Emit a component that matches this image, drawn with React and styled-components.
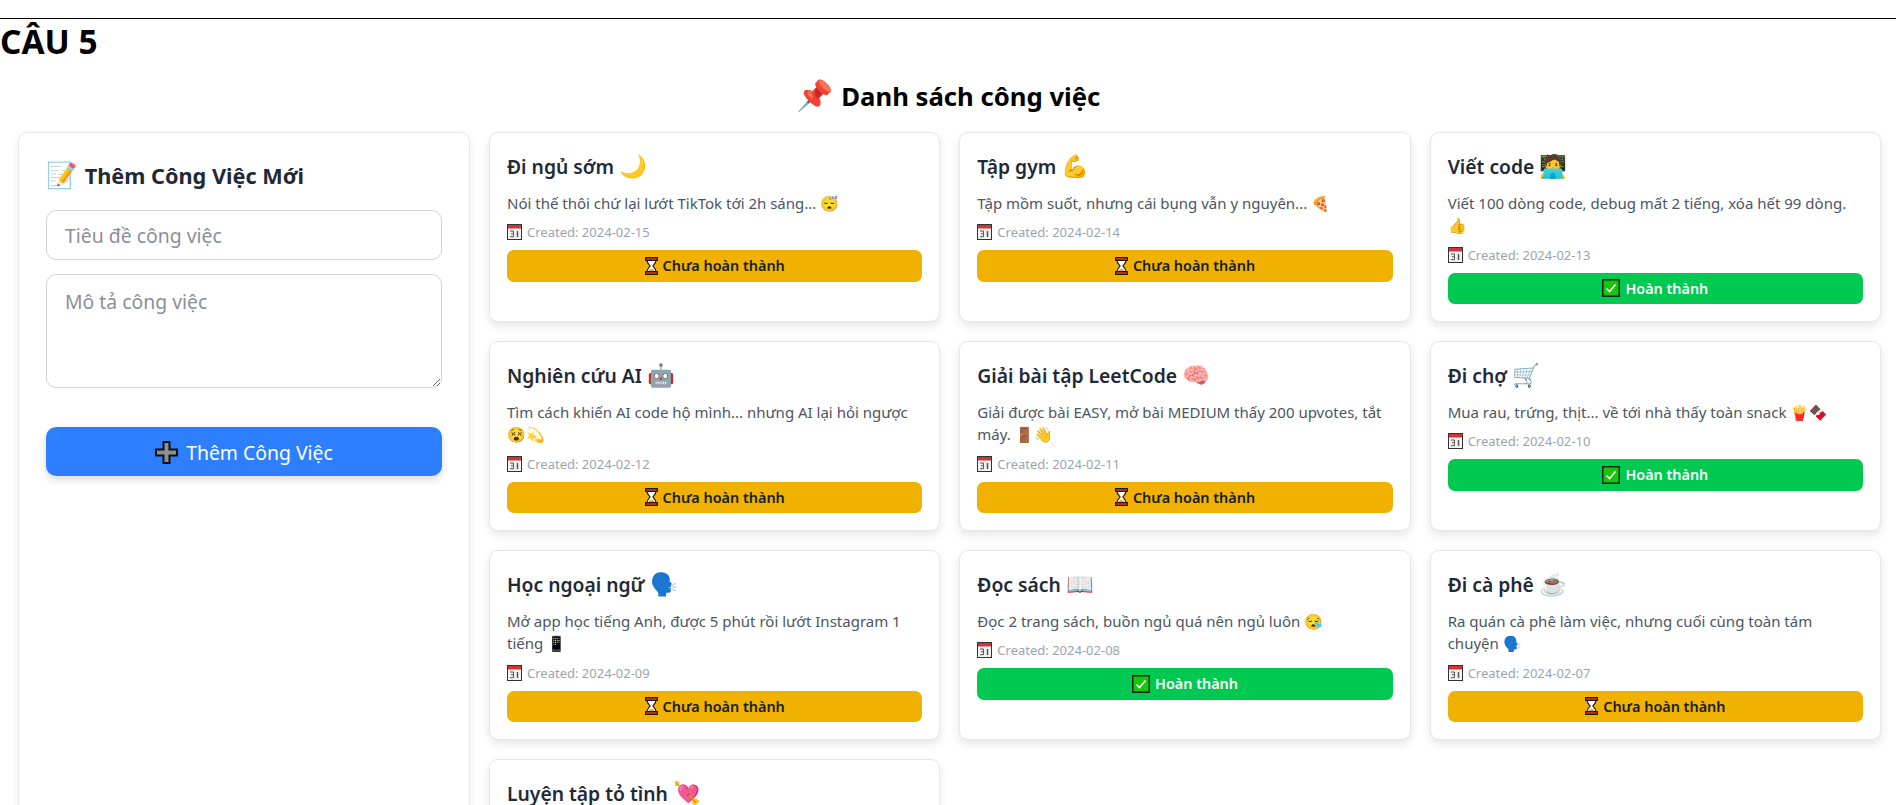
import React from 'react';
import styled, { createGlobalStyle } from 'styled-components';

const tasks = [
  { id: 1, title: 'Đi ngủ sớm', icon: '🌙', desc: 'Nói thế thôi chứ lại lướt TikTok tới 2h sáng... 😴', date: '2024-02-15', done: false },
  { id: 2, title: 'Tập gym', icon: '💪', desc: 'Tập mồm suốt, nhưng cái bụng vẫn y nguyên... 🍕', date: '2024-02-14', done: false },
  { id: 3, title: 'Viết code', icon: '🧑‍💻', desc: 'Viết 100 dòng code, debug mất 2 tiếng, xóa hết 99 dòng. 👍', date: '2024-02-13', done: true },
  { id: 4, title: 'Nghiên cứu AI', icon: '🤖', desc: 'Tìm cách khiến AI code hộ mình... nhưng AI lại hỏi ngược 😵💫', date: '2024-02-12', done: false },
  { id: 5, title: 'Giải bài tập LeetCode', icon: '🧠', desc: 'Giải được bài EASY, mở bài MEDIUM thấy 200 upvotes, tắt máy. 🚪👋', date: '2024-02-11', done: false },
  { id: 6, title: 'Đi chợ', icon: '🛒', desc: 'Mua rau, trứng, thịt... về tới nhà thấy toàn snack 🍟🍫', date: '2024-02-10', done: true },
  { id: 7, title: 'Học ngoại ngữ', icon: '🗣️', desc: 'Mở app học tiếng Anh, được 5 phút rồi lướt Instagram 1 tiếng 📱', date: '2024-02-09', done: false },
  { id: 8, title: 'Đọc sách', icon: '📖', desc: 'Đọc 2 trang sách, buồn ngủ quá nên ngủ luôn 😪', date: '2024-02-08', done: true },
  { id: 9, title: 'Đi cà phê', icon: '☕', desc: 'Ra quán cà phê làm việc, nhưng cuối cùng toàn tám chuyện 🗣️', date: '2024-02-07', done: false },
  { id: 10, title: 'Luyện tập tỏ tình', icon: '💘' },
];

const GlobalStyle = createGlobalStyle`
  * {
    box-sizing: border-box;
  }
  html, body {
    margin: 0;
    height: 100%;
    overflow: hidden;
    background: #fff;
  }
  body {
    font-family: "Noto Sans", "Open Sans", sans-serif;
  }
`;

const Rule = styled.hr`
  margin: 18px 0 0;
  border: none;
  border-top: 1px solid #000;
`;

const Heading = styled.h2`
  margin: 0;
  height: 41px;
  font-size: 33.400px;
  line-height: 44px;
  font-weight: 700;
  color: #000;
`;

const PageTitle = styled.h1`
  margin: 19px 0 0;
  height: 30px;
  text-align: center;
  font-size: 25.7px;
  line-height: 36px;
  font-weight: 700;
  color: #000;
`;

const Emoji = styled.span`
  margin-right: ${(p) => p.$gap || 0}px;
  font-size: 1.16em;
  line-height: 1;
`;

const Layout = styled.div`
  display: grid;
  grid-template-columns: 452px 1fr;
  gap: 19px;
  margin-top: 22.5px;
  padding: 0 15px 20px 18px;
`;

const Panel = styled.aside`
  padding: 27px;
  background: #fff;
  border: 1px solid #e5e7eb;
  border-radius: 9px;
  box-shadow: 0 4px 10px rgba(0, 0, 0, 0.08);
`;

const PanelTitle = styled.h3`
  margin: 0 0 18px;
  height: 32px;
  font-size: 21.7px;
  line-height: 32px;
  font-weight: 700;
  color: #1f2937;
`;

const TextInput = styled.input`
  display: block;
  width: 100%;
  height: 50px;
  padding: 2px 18px 0;
  border: 1px solid #d1d5db;
  border-radius: 10px;
  font: inherit;
  font-size: 19.4px;
  &::placeholder {
    color: #8a8f98;
  }
`;

const TextArea = styled.textarea`
  display: block;
  width: 100%;
  height: 114px;
  margin-top: 14.5px;
  padding: 13px 18px;
  border: 1px solid #d1d5db;
  border-radius: 10px;
  font: inherit;
  font-size: 19.4px;
  &::placeholder {
    color: #8a8f98;
  }
`;

const AddButton = styled.button`
  display: flex;
  align-items: center;
  justify-content: center;
  gap: 8px;
  width: 100%;
  height: 49px;
  margin-top: 39px;
  padding: 2px 0 0;
  border: none;
  border-radius: 10px;
  background: #2d7fff;
  color: #fff;
  font: inherit;
  font-size: 19.4px;
  box-shadow: 0 4px 8px rgba(0, 0, 0, 0.14);
`;

const Cards = styled.div`
  display: grid;
  grid-template-columns: repeat(3, 1fr);
  gap: 18.5px 19px;
`;

const Card = styled.article`
  padding: 18px 17px 17px;
  background: #fff;
  border: 1px solid #e5e7eb;
  border-radius: 9px;
  box-shadow: 0 4px 10px rgba(0, 0, 0, 0.1);
`;

const CardTitle = styled.h4`
  margin: 0 0 9px;
  height: 32px;
  font-size: 19.3px;
  line-height: 32px;
  font-weight: 600;
  color: #1f2937;
`;

const CardDesc = styled.p`
  margin: 0;
  font-size: 15px;
  line-height: 22.5px;
  color: #4b5563;
`;

const CardDate = styled.p`
  display: flex;
  align-items: center;
  gap: 5px;
  margin: 8px 0 0;
  font-size: 13px;
  line-height: 20px;
  color: #9ca3af;
`;

const StatusButton = styled.button`
  display: flex;
  align-items: center;
  justify-content: center;
  gap: 5px;
  width: 100%;
  height: 31.5px;
  margin-top: 8px;
  border: none;
  border-radius: 7px;
  background: ${(p) => (p.$done ? '#00c951' : '#f0b100')};
  color: ${(p) => (p.$done ? '#fff' : '#161d27')};
  font: inherit;
  font-size: 14.4px;
  font-weight: 600;
`;

const PlusIcon = () => (
  <svg width="23" height="23" viewBox="0 0 23 23">
    <path d="M8.5 1h6v7.5H22v6h-7.5V22h-6v-7.5H1v-6h7.5z" fill="#8f8f8f" stroke="#111" strokeWidth="2" />
  </svg>
);

const CheckIcon = () => (
  <svg width="18" height="18" viewBox="0 0 18 18">
    <rect x="0.75" y="0.75" width="16.5" height="16.5" fill="#16c60c" stroke="#10261a" strokeWidth="1.5" />
    <path d="M4.5 9.5l3 3 6-7" fill="none" stroke="#fff" strokeWidth="1.6" />
  </svg>
);

const HourglassIcon = () => (
  <svg width="13" height="18" viewBox="0 0 13 18">
    <path d="M2 3c0 4 3 5 3 6s-3 2-3 6h9c0-4-3-5-3-6s3-2 3-6z" fill="#fff" stroke="#1a1a1a" strokeWidth="1.2" />
    <path d="M3.2 15c.4-2 2-3 3.3-3.4 1.3.4 2.9 1.4 3.3 3.4z" fill="#f9a825" />
    <rect x="0.6" y="0.6" width="11.8" height="2.8" fill="#d83b01" stroke="#1a1a1a" strokeWidth="1.2" />
    <rect x="0.6" y="14.6" width="11.8" height="2.8" fill="#d83b01" stroke="#1a1a1a" strokeWidth="1.2" />
  </svg>
);

const CalendarIcon = () => (
  <svg width="15" height="16" viewBox="0 0 15 16">
    <rect x="0.5" y="0.5" width="14" height="15" fill="#f2f2f2" stroke="#333" />
    <rect x="1" y="1" width="13" height="3.5" fill="#d13438" />
    <path d="M3 7h3.500v2.700H4M6.500 9.700v3H3" fill="none" stroke="#555" />
    <path d="M10.500 7v6" stroke="#555" strokeWidth="1.500" />
  </svg>
);

function TaskCard({ task }) {
  return (
    <Card>
      <CardTitle>
        {task.title} <Emoji>{task.icon}</Emoji>
      </CardTitle>
      {task.desc && (
        <>
          <CardDesc>{task.desc}</CardDesc>
          <CardDate>
            <CalendarIcon />
            Created: {task.date}
          </CardDate>
          <StatusButton $done={task.done}>
            {task.done ? <CheckIcon /> : <HourglassIcon />}
            {task.done ? 'Hoàn thành' : 'Chưa hoàn thành'}
          </StatusButton>
        </>
      )}
    </Card>
  );
}

export default function App() {
  return (
    <>
      <GlobalStyle />
      <Rule />
      <Heading>CÂU 5</Heading>
      <PageTitle>
        <Emoji $gap={2}>📌</Emoji> Danh sách công việc
      </PageTitle>
      <Layout>
        <Panel>
          <PanelTitle>
            <Emoji $gap={2}>📝</Emoji> Thêm Công Việc Mới
          </PanelTitle>
          <TextInput placeholder="Tiêu đề công việc" />
          <TextArea placeholder="Mô tả công việc" />
          <AddButton>
            <PlusIcon />
            Thêm Công Việc
          </AddButton>
        </Panel>
        <Cards>
          {tasks.map((task) => (
            <TaskCard key={task.id} task={task} />
          ))}
        </Cards>
      </Layout>
    </>
  );
}
